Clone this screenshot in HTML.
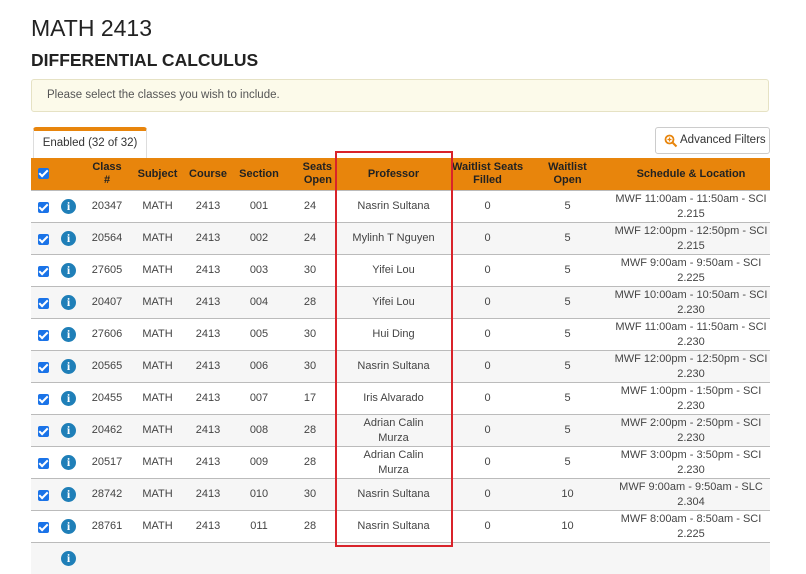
<!DOCTYPE html>
<html><head><style>
body{margin:0;background:#fff;font-family:"Liberation Sans",Arial,sans-serif;color:#333;width:806px;height:548px;overflow:hidden;position:relative}
h1{position:absolute;left:31px;top:15px;margin:0;font-size:23px;font-weight:normal;color:#222}
h2{position:absolute;left:31px;top:50px;margin:0;font-size:17.5px;font-weight:bold;color:#222}
.alert{position:absolute;left:31px;top:79px;width:736px;height:31px;background:#fcfaea;border:1px solid #e6e2c4;border-radius:3px;font-size:11.5px;line-height:31px;color:#555;text-indent:15px}
.tab{position:absolute;left:33px;top:127px;width:112px;height:27px;border-top:4px solid #e8850c;border-left:1px solid #ddd;border-right:1px solid #ddd;border-radius:3px 3px 0 0;font-size:11.5px;line-height:25px;text-align:center;background:#fff;white-space:nowrap}
.btn{position:absolute;left:655px;top:127px;width:113px;height:25px;border:1px solid #ccc;border-radius:3px;font-size:11.5px;line-height:25px;background:#fff;white-space:nowrap}
table{position:absolute;left:31px;top:158px;width:739px;border-collapse:collapse;font-size:11px;table-layout:fixed}
th{background:#e8850c;color:#222;font-weight:bold;height:32px;padding:0;line-height:13px;text-align:center;white-space:nowrap;overflow:hidden}
td{height:31px;padding:0;text-align:center;border-top:1px solid #bbb;line-height:15px;color:#444;white-space:nowrap;overflow:hidden}
tr:nth-child(odd) td{background:#f6f6f6}
.cb{display:inline-block;width:11px;height:11px;background:#1a73e8;border-radius:2px;position:relative;vertical-align:middle;margin-top:3px}
.cb:after{content:"";position:absolute;left:3px;top:0px;width:3px;height:7px;border:solid #fff;border-width:0 2px 2px 0;transform:rotate(45deg)}
.i{display:inline-block;width:15px;height:15px;border-radius:50%;background:#1f7fb8;color:#fff;font-weight:bold;font-family:"Liberation Serif",serif;font-size:12px;line-height:15px;vertical-align:middle}
.red{position:absolute;left:335px;top:151px;width:114px;height:392px;border:2px solid #d9232a}
</style></head><body>
<h1>MATH 2413</h1>
<h2>DIFFERENTIAL CALCULUS</h2>
<div class="alert">Please select the classes you wish to include.</div>
<div class="tab">Enabled (32 of 32)</div>
<div class="btn"><svg width="14" height="14" viewBox="0 0 14 14" style="position:absolute;left:8px;top:6px"><circle cx="5.5" cy="5.5" r="4" fill="none" stroke="#e8850c" stroke-width="1.8"/><path d="M8.5 8.5L12.5 12.5" stroke="#e8850c" stroke-width="2"/><path d="M5.5 3.5v4M3.5 5.5h4" stroke="#e8850c" stroke-width="1.2"/></svg><span style="position:absolute;left:24px">Advanced Filters</span></div>
<table>
<colgroup><col style="width:24px"><col style="width:27px"><col style="width:50px"><col style="width:51px"><col style="width:50px"><col style="width:52px"><col style="width:50px"><col style="width:117px"><col style="width:71px"><col style="width:89px"><col style="width:158px"></colgroup>
<tr><th><span class="cb" style="margin-top:0"></span></th><th></th><th>Class<br>#</th><th>Subject</th><th>Course</th><th>Section</th><th style="text-align:right;padding-right:3px">Seats<br>Open</th><th>Professor</th><th>Waitlist Seats<br>Filled</th><th>Waitlist<br>Open</th><th>Schedule &amp; Location</th></tr>
<tr><td><span class="cb"></span></td><td><span class="i">i</span></td><td>20347</td><td>MATH</td><td>2413</td><td>001</td><td>24</td><td>Nasrin Sultana</td><td>0</td><td>5</td><td>MWF 11:00am - 11:50am - SCI<br>2.215</td></tr>
<tr><td><span class="cb"></span></td><td><span class="i">i</span></td><td>20564</td><td>MATH</td><td>2413</td><td>002</td><td>24</td><td>Mylinh T Nguyen</td><td>0</td><td>5</td><td>MWF 12:00pm - 12:50pm - SCI<br>2.215</td></tr>
<tr><td><span class="cb"></span></td><td><span class="i">i</span></td><td>27605</td><td>MATH</td><td>2413</td><td>003</td><td>30</td><td>Yifei Lou</td><td>0</td><td>5</td><td>MWF 9:00am - 9:50am - SCI<br>2.225</td></tr>
<tr><td><span class="cb"></span></td><td><span class="i">i</span></td><td>20407</td><td>MATH</td><td>2413</td><td>004</td><td>28</td><td>Yifei Lou</td><td>0</td><td>5</td><td>MWF 10:00am - 10:50am - SCI<br>2.230</td></tr>
<tr><td><span class="cb"></span></td><td><span class="i">i</span></td><td>27606</td><td>MATH</td><td>2413</td><td>005</td><td>30</td><td>Hui Ding</td><td>0</td><td>5</td><td>MWF 11:00am - 11:50am - SCI<br>2.230</td></tr>
<tr><td><span class="cb"></span></td><td><span class="i">i</span></td><td>20565</td><td>MATH</td><td>2413</td><td>006</td><td>30</td><td>Nasrin Sultana</td><td>0</td><td>5</td><td>MWF 12:00pm - 12:50pm - SCI<br>2.230</td></tr>
<tr><td><span class="cb"></span></td><td><span class="i">i</span></td><td>20455</td><td>MATH</td><td>2413</td><td>007</td><td>17</td><td>Iris Alvarado</td><td>0</td><td>5</td><td>MWF 1:00pm - 1:50pm - SCI<br>2.230</td></tr>
<tr><td><span class="cb"></span></td><td><span class="i">i</span></td><td>20462</td><td>MATH</td><td>2413</td><td>008</td><td>28</td><td>Adrian Calin<br>Murza</td><td>0</td><td>5</td><td>MWF 2:00pm - 2:50pm - SCI<br>2.230</td></tr>
<tr><td><span class="cb"></span></td><td><span class="i">i</span></td><td>20517</td><td>MATH</td><td>2413</td><td>009</td><td>28</td><td>Adrian Calin<br>Murza</td><td>0</td><td>5</td><td>MWF 3:00pm - 3:50pm - SCI<br>2.230</td></tr>
<tr><td><span class="cb"></span></td><td><span class="i">i</span></td><td>28742</td><td>MATH</td><td>2413</td><td>010</td><td>30</td><td>Nasrin Sultana</td><td>0</td><td>10</td><td>MWF 9:00am - 9:50am - SLC<br>2.304</td></tr>
<tr><td><span class="cb"></span></td><td><span class="i">i</span></td><td>28761</td><td>MATH</td><td>2413</td><td>011</td><td>28</td><td>Nasrin Sultana</td><td>0</td><td>10</td><td>MWF 8:00am - 8:50am - SCI<br>2.225</td></tr>
<tr><td></td><td><span class="i">i</span></td><td></td><td></td><td></td><td></td><td></td><td></td><td></td><td></td><td></td></tr>
</table>
<div class="red"></div>
</body></html>
